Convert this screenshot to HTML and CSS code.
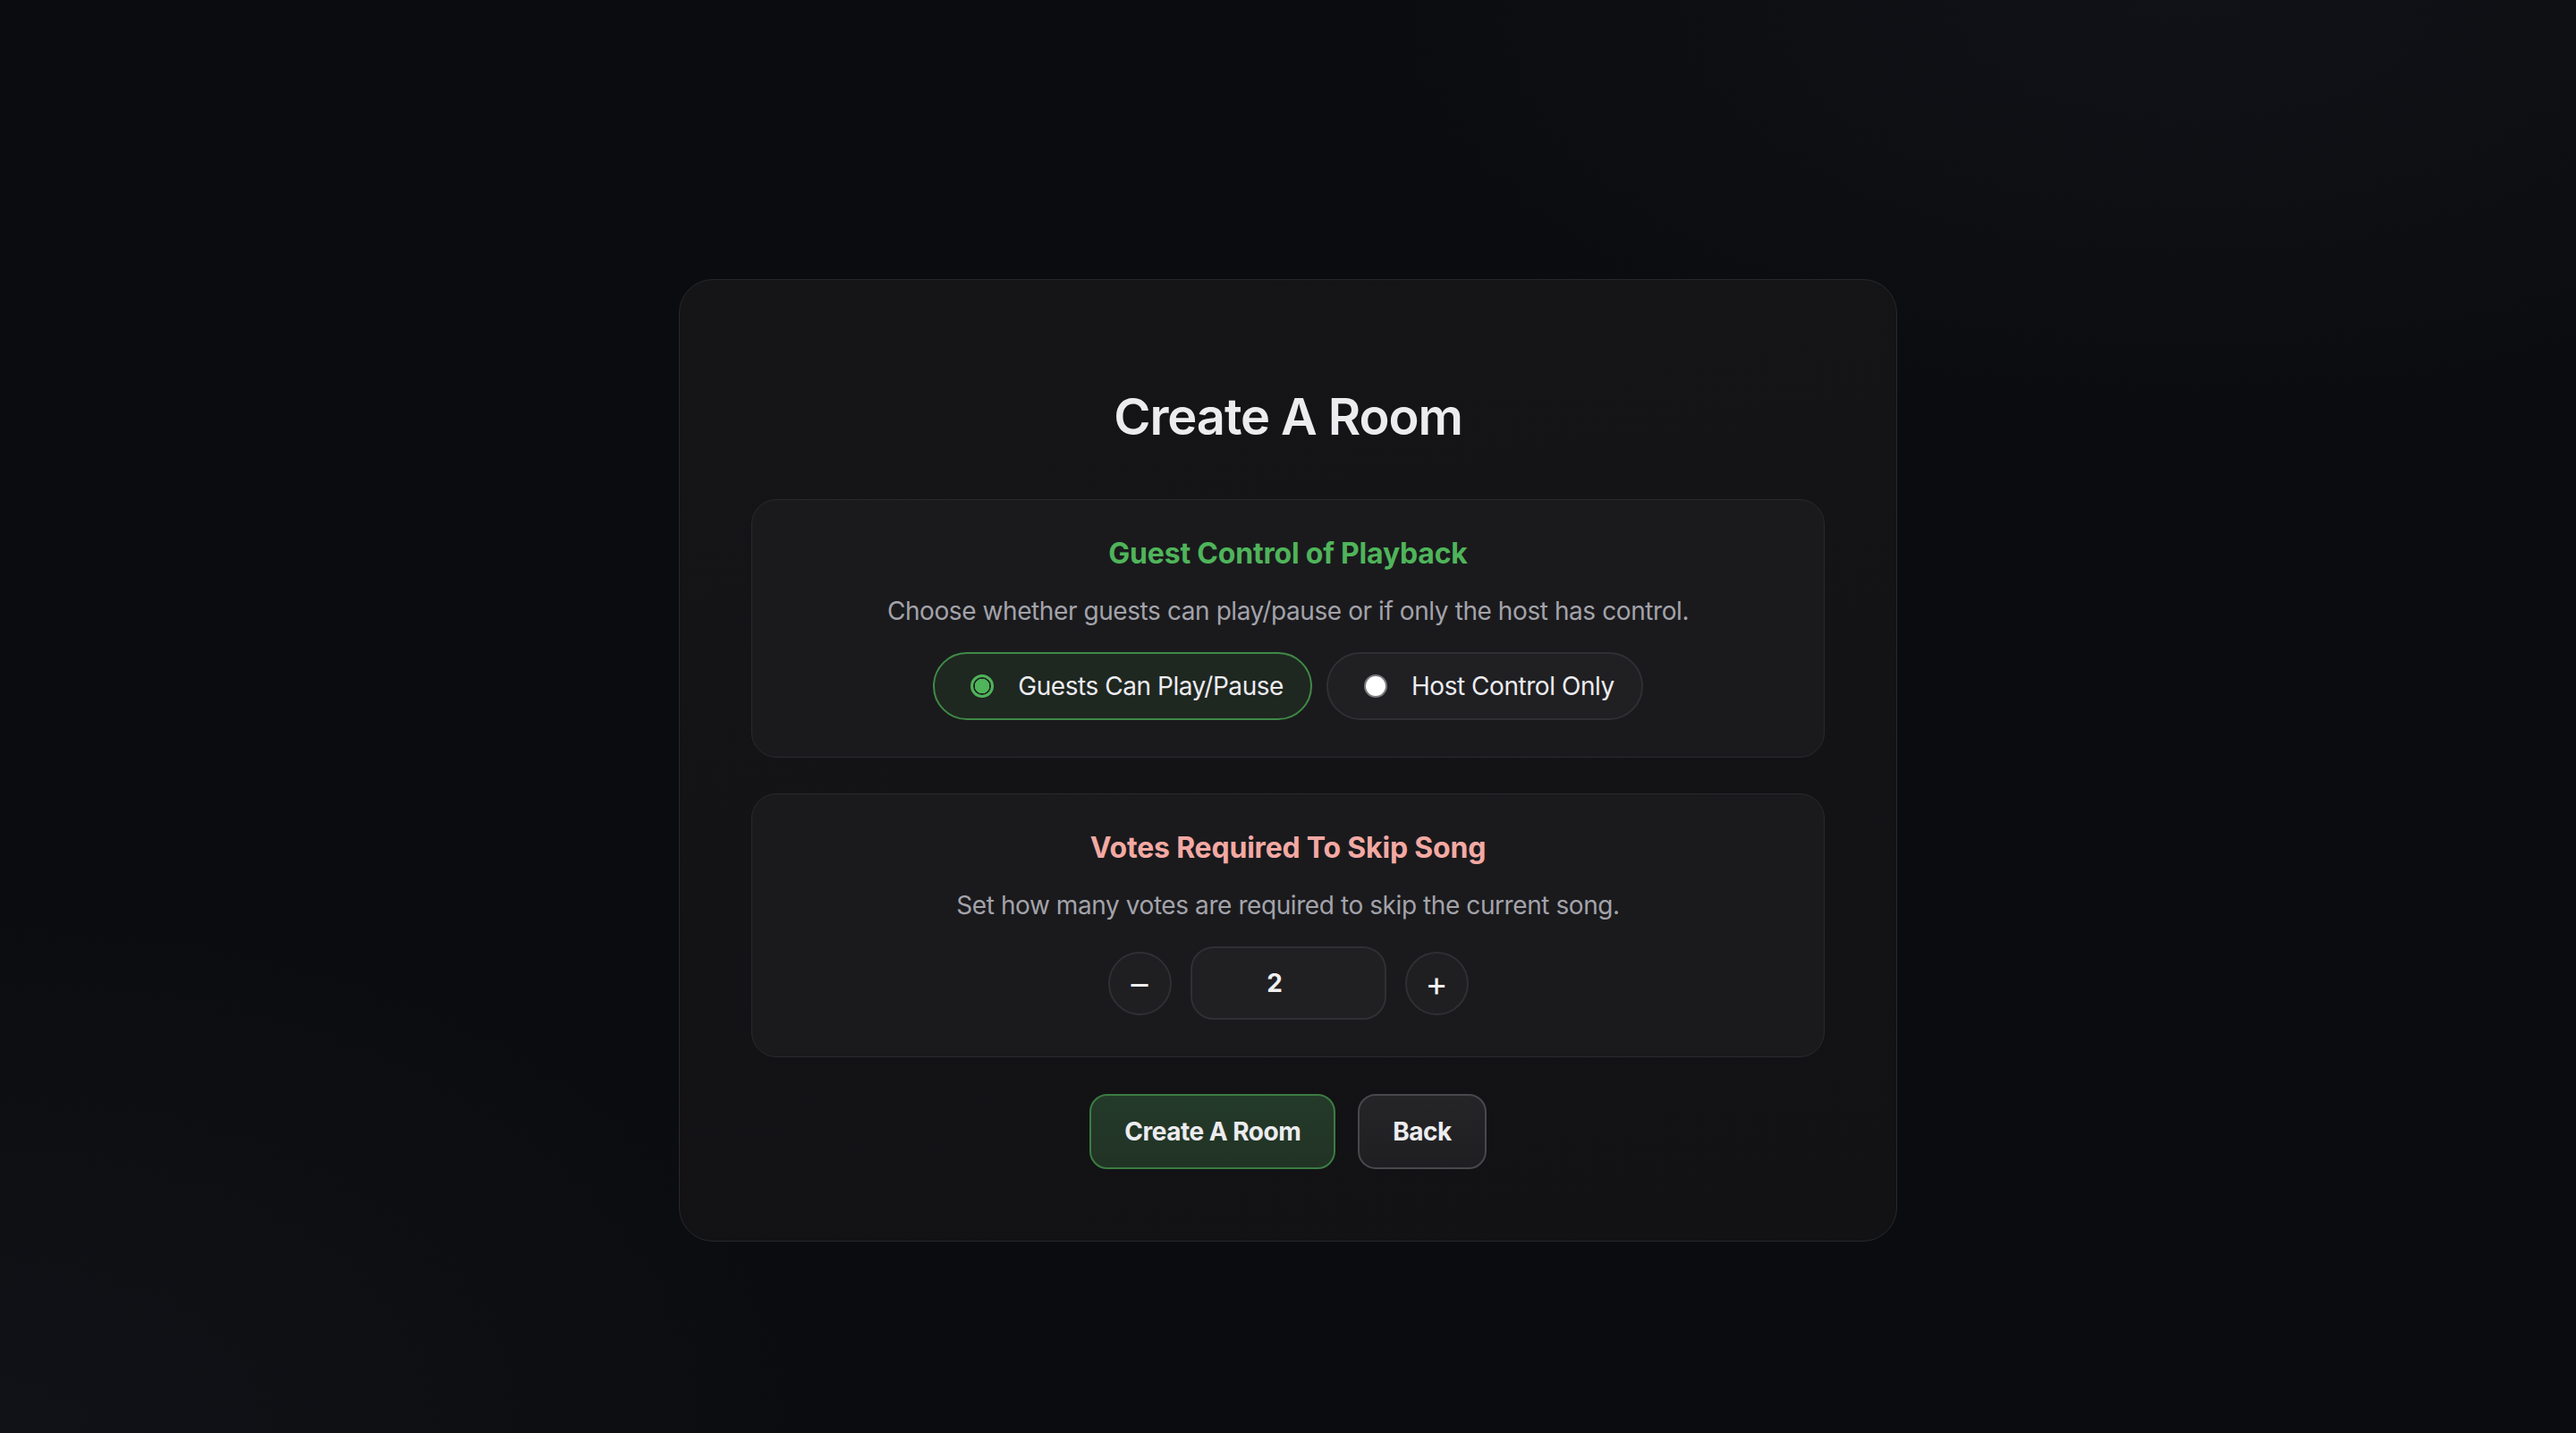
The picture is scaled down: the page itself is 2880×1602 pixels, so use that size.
FILE: index.html
```html
<!DOCTYPE html>
<html lang="en">
<head>
<meta charset="utf-8">
<title>Create A Room</title>
<link rel="stylesheet" href="styles.css">
</head>
<body>
<main class="page">
  <section class="card">
    <h1 class="title">Create A Room</h1>

    <div class="panel">
      <h2 class="panel-title green">Guest Control of Playback</h2>
      <p class="panel-desc">Choose whether guests can play/pause or if only the host has control.</p>
      <div class="options">
        <label class="pill pill-active">
          <span class="radio radio-on"></span>
          <span class="pill-text">Guests Can Play/Pause</span>
        </label>
        <label class="pill">
          <span class="radio radio-off"></span>
          <span class="pill-text">Host Control Only</span>
        </label>
      </div>
    </div>

    <div class="panel">
      <h2 class="panel-title pink">Votes Required To Skip Song</h2>
      <p class="panel-desc">Set how many votes are required to skip the current song.</p>
      <div class="stepper">
        <button class="step-btn" type="button">&#8211;</button>
        <div class="step-value">2</div>
        <button class="step-btn" type="button">+</button>
      </div>
    </div>

    <div class="actions">
      <button class="btn btn-primary" type="button">Create A Room</button>
      <button class="btn btn-secondary" type="button">Back</button>
    </div>
  </section>
</main>
</body>
</html>
```

FILE: styles.css
```css
* { box-sizing: border-box; }

html, body {
  margin: 0;
  padding: 0;
  height: 100%;
}

body {
  font-family: Inter, "Noto Sans", "Liberation Sans", sans-serif;
  color: #e9e9ec;
  background-color: #0b0c0f;
  background-image:
    radial-gradient(ellipse 1400px 900px at 0% 100%, rgba(22, 26, 34, 0.45), rgba(22, 26, 34, 0) 70%),
    radial-gradient(ellipse 1400px 700px at 85% 0%, rgba(22, 24, 32, 0.5), rgba(22, 24, 32, 0) 70%);
}

.page {
  min-height: 100vh;
  display: flex;
  justify-content: center;
  align-items: flex-start;
  padding-top: 312px;
}

.card {
  width: 1362px;
  padding: 80px;
  border: 1px solid #28282c;
  border-radius: 38px;
  background: linear-gradient(170deg, #151518 0%, #131316 60%, #121214 100%);
  display: flex;
  flex-direction: column;
  align-items: center;
}

.title {
  margin: 39px 0 58px;
  font-size: 56px;
  line-height: 68px;
  font-weight: 600;
  letter-spacing: -1.1px;
  color: #ececef;
}

.panel {
  width: 1200px;
  padding: 40px 40px 41px;
  border: 1px solid #2a2a2e;
  border-radius: 28px;
  background: #1a1a1d;
  display: flex;
  flex-direction: column;
  align-items: center;
}

.panel + .panel { margin-top: 40px; }

.panel-title {
  margin: 0;
  font-size: 32px;
  line-height: 40px;
  font-weight: 700;
  letter-spacing: -0.2px;
}

.green { color: #4fb45a; }
.pink { color: #f3a9a3; }

.panel-desc {
  margin: 23px 0 25px;
  font-size: 28px;
  line-height: 42px;
  letter-spacing: -0.42px;
  color: #a3a3aa;
}

.options {
  display: flex;
  gap: 16px;
}

.pill {
  height: 76px;
  display: flex;
  align-items: center;
  padding: 0 30px 0 40px;
  border: 2px solid #303034;
  border-radius: 38px;
  background: #202023;
  font-size: 28px;
  letter-spacing: -0.45px;
  color: #ececef;
}

.pill-active {
  border-color: #3f8a46;
  background: #1f2721;
}

.pill-text { margin-left: 27px; }

.radio {
  width: 26px;
  height: 26px;
  border-radius: 50%;
  flex: none;
}

.radio-on {
  border: 3px solid #4fb45a;
  background: radial-gradient(circle, #4fb45a 0 8px, #1f2721 8.5px);
}

.radio-off {
  border: 2px solid #7a7a80;
  background: #ffffff;
}

.stepper {
  display: flex;
  align-items: center;
  gap: 21px;
}

.step-btn {
  width: 71px;
  height: 71px;
  border-radius: 50%;
  border: 2px solid #303034;
  background: #1f1f22;
  color: #f0f0f2;
  font-family: Inter, "Noto Sans", "Liberation Sans", sans-serif;
  font-size: 38px;
  font-weight: 400;
  line-height: 1;
  padding: 0;
  display: flex;
  align-items: center;
  justify-content: center;
}

.step-value {
  width: 219px;
  height: 82px;
  border: 2px solid #303034;
  border-radius: 26px;
  background: #202023;
  display: flex;
  align-items: center;
  justify-content: center;
  padding-right: 30px;
  font-size: 28px;
  font-weight: 700;
  color: #f0f0f2;
}

.actions {
  margin-top: 41px;
  display: flex;
  gap: 25px;
}

.btn {
  height: 84px;
  padding: 0 37px;
  white-space: nowrap;
  border-radius: 20px;
  font-family: Inter, "Noto Sans", "Liberation Sans", sans-serif;
  font-size: 28px;
  font-weight: 700;
  letter-spacing: -0.5px;
  color: #ececef;
}

.btn-primary {
  border: 2px solid #3b7c42;
  background: linear-gradient(180deg, #243a29 0%, #213325 100%);
}

.btn-secondary {
  border: 2px solid #48484d;
  background: linear-gradient(180deg, #252528 0%, #1f1f22 100%);
}
```
